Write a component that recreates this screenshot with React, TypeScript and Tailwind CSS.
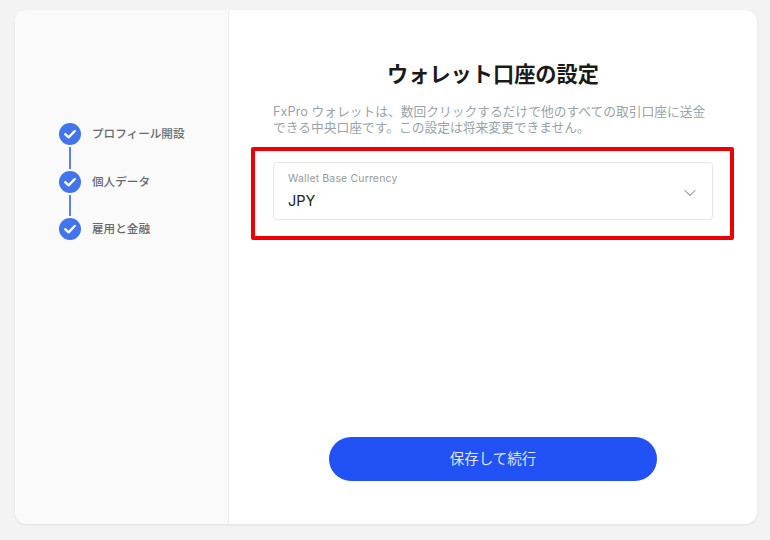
import { ChevronDown } from "lucide-react"

const FONT = "font-['Inter','Noto_Sans_CJK_JP',sans-serif]"

const steps = ["プロフィール開設", "個人データ", "雇用と金融"]

function CheckCircle() {
  return (
    <div className="flex h-[22px] w-[22px] shrink-0 items-center justify-center rounded-full bg-[#4274ec]">
      <svg width="14" height="14" viewBox="0 0 14 14" fill="none">
        <path d="M2.2 7.2 L5.6 10.4 L11.8 4" stroke="white" strokeWidth="2.3" strokeLinecap="round" strokeLinejoin="round" />
      </svg>
    </div>
  )
}

export default function App() {
  return (
    <div className={`h-[540px] w-[770px] overflow-hidden bg-[#f3f3f3] pl-[15px] pt-[10px] ${FONT}`}>
      <div className="flex h-[514px] w-[742px] overflow-hidden rounded-xl bg-white shadow-[0_1px_3px_rgba(0,0,0,0.08)]">
        {/* Sidebar */}
        <div className="w-[214px] shrink-0 border-r border-[#ececec] bg-[#fafafa] pl-[44px] pt-[113px]">
          {steps.map((label, i) => (
            <div key={label}>
              <div className="flex items-center gap-[11px]">
                <CheckCircle />
                <span className="text-[11.6px] leading-[22px] font-medium text-[#666a6e]">{label}</span>
              </div>
              {i < steps.length - 1 && <div className="my-[2px] ml-[10px] h-[21.5px] w-[2px] bg-[#5c82e0]"></div>}
            </div>
          ))}
        </div>

        {/* Main */}
        <div className="flex flex-1 flex-col items-start">
          <h1 className="mt-[50px] self-center text-[21.2px] leading-[28px] font-bold text-[#1a1a1a]">ウォレット口座の設定</h1>
          <p className="mt-[15.5px] ml-[44px] w-[440px] text-[12.75px] leading-[16px] text-[#9aa3aa]">
            FxPro ウォレットは、数回クリックするだけで他のすべての取引口座に送金できる中央口座です。この設定は将来変更できません。
          </p>
          <div className="mt-[11.5px] ml-[22px] w-[483px] rounded-[2px] border-4 border-[#ee0000] pl-[18px] pr-[17px] pt-[11px] pb-[16px]">
            <div className="flex h-[58px] items-center justify-between rounded border border-[#e6e6e6] bg-white pl-[14px] pr-[12px]">
              <div className="flex flex-col pb-[2px]">
                <span className="text-[10.5px] leading-[16px] tracking-[0.15px] text-[#9a9a9a]">Wallet Base Currency</span>
                <span className="mt-[5px] text-[14.5px] leading-[18px] text-[#222222]">JPY</span>
              </div>
              <ChevronDown className="mt-[3px] h-[20px] w-[20px] text-[#a8b0b6]" strokeWidth={1.5} />
            </div>
          </div>
          <button className="mt-[197px] ml-[100px] h-[44px] w-[328px] rounded-full bg-[#2251f5] text-[14.5px] text-[#dfe6fb]">
            保存して続行
          </button>
        </div>
      </div>
    </div>
  )
}
